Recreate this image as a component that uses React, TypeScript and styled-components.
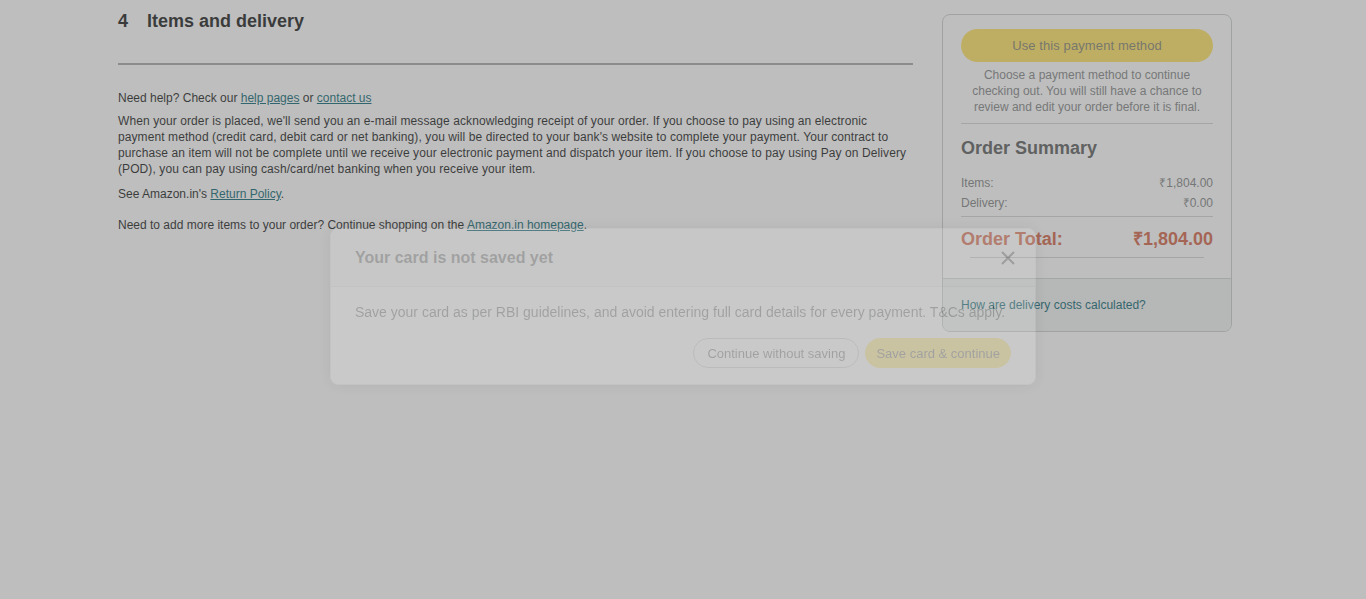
import React from "react";
import styled, { createGlobalStyle } from "styled-components";

const Global = createGlobalStyle`
  html, body { margin: 0; padding: 0; background: #ffffff; }
  body { font-family: "Liberation Sans", Arial, sans-serif; color: #0f1111; }
  * { box-sizing: border-box; }
`;

const Page = styled.div`
  display: flex;
  align-items: flex-start;
  gap: 29px;
  padding: 9px 0 0 118px;
  min-height: 599px;
`;

const Main = styled.div`
  width: 795px;
  font-size: 12px;
  line-height: 16px;
  color: #0f1111;
`;

const SectionHeader = styled.h2`
  display: flex;
  gap: 19px;
  margin: 0;
  font-size: 18px;
  line-height: 24px;
  font-weight: 700;
  color: #0f1111;
`;

const Rule = styled.hr`
  margin: 30px 0 25px;
  border: 0;
  height: 2px;
  background: #a2a6a6;
`;

const Para = styled.p<{ $gap?: number; $wide?: boolean }>`
  margin: 0 0 ${(p) => p.$gap ?? 7}px;
  letter-spacing: ${(p) => (p.$wide ? "0.09px" : "0")};
`;

const Link = styled.a`
  color: #005f6e;
  text-decoration: underline;
  cursor: pointer;
`;

const Side = styled.aside`
  width: 290px;
  margin-top: 5px;
  border: 1px solid #c8cccc;
  border-radius: 8px;
  overflow: hidden;
`;

const SideMain = styled.div`
  padding: 14px 18px 20px;
`;

const PayButton = styled.button`
  display: block;
  width: 100%;
  height: 33px;
  border: 0;
  border-radius: 17px;
  background: #ffe25a;
  color: #7f7f6c;
  font-family: inherit;
  font-size: 13px;
  letter-spacing: 0.1px;
`;

const Helper = styled.p`
  margin: 5px 0 8px;
  text-align: center;
  font-size: 12px;
  line-height: 16px;
  color: #7d7f7f;
`;

const Divider = styled.div<{ $inset?: number; $top?: number }>`
  height: 1px;
  background: #cfd3d3;
  margin: ${(p) => p.$top ?? 0}px ${(p) => p.$inset ?? 0}px 0;
`;

const SummaryTitle = styled.h3`
  margin: 12px 0 13px;
  font-size: 18px;
  line-height: 24px;
  font-weight: 700;
  color: #545656;
`;

const Row = styled.div`
  display: flex;
  justify-content: space-between;
  font-size: 12px;
  line-height: 20px;
  color: #7b7d7d;
`;

const TotalRow = styled.div`
  display: flex;
  justify-content: space-between;
  margin: 10px 0 6px;
  font-size: 18px;
  line-height: 24px;
  font-weight: 700;
  color: #d25e40;
`;

const SideFooter = styled.div`
  border-top: 1px solid #cfd3d3;
  background: #f0f2f2;
  padding: 18px;
  font-size: 12px;
  line-height: 16px;
`;

const FooterLink = styled(Link)`
  text-decoration: none;
`;

const Overlay = styled.div`
  position: fixed;
  inset: 0;
  background: rgba(111, 111, 111, 0.45);
`;

const ModalLayer = styled.div`
  position: fixed;
  inset: 0;
  display: flex;
  justify-content: center;
  align-items: flex-start;
  padding-top: 228px;
`;

const Modal = styled.div`
  width: 706px;
  background: #ffffff;
  border: 1px solid #d5d9d9;
  border-radius: 8px;
  box-shadow: 0 0 14px rgba(0, 0, 0, 0.35);
  opacity: 0.17;
  overflow: hidden;
`;

const ModalHeader = styled.div`
  display: flex;
  align-items: center;
  justify-content: space-between;
  height: 58px;
  padding: 0 19px 0 24px;
  background: #f0f2f2;
  border-bottom: 1px solid #d5d9d9;
`;

const ModalTitle = styled.h4`
  margin: 0;
  font-size: 16px;
  font-weight: 700;
  color: #0f1111;
`;

const CloseButton = styled.button`
  display: flex;
  padding: 0;
  border: 0;
  background: none;
  color: #000;
`;

const ModalBody = styled.div`
  padding: 15px 24px 16px;
`;

const ModalText = styled.p`
  margin: 0 0 16px;
  font-size: 14px;
  line-height: 20px;
  white-space: nowrap;
  color: #0f1111;
`;

const Actions = styled.div`
  display: flex;
  justify-content: flex-end;
  gap: 6px;
`;

const Pill = styled.button<{ $primary?: boolean }>`
  height: 30px;
  padding: 0 ${(p) => (p.$primary ? 10 : 13)}px;
  border-radius: 15px;
  font-family: inherit;
  font-size: 13px;
  color: #0f1111;
  border: 1px solid ${(p) => (p.$primary ? "#ffd814" : "#a8adad")};
  background: ${(p) => (p.$primary ? "#ffd814" : "#ffffff")};
`;

export default function App() {
  return (
    <>
      <Global />
      <Page>
        <Main>
          <SectionHeader>
            <span>4</span>
            <span>Items and delivery</span>
          </SectionHeader>
          <Rule />
          <Para>
            Need help? Check our <Link>help pages</Link> or <Link>contact us</Link>
          </Para>
          <Para $gap={9} $wide>
            When your order is placed, we'll send you an e-mail message acknowledging receipt of your order. If you
            choose to pay using an electronic payment method (credit card, debit card or net banking), you will be
            directed to your bank's website to complete your payment. Your contract to purchase an item will not be
            complete until we receive your electronic payment and dispatch your item. If you choose to pay using Pay on
            Delivery (POD), you can pay using cash/card/net banking when you receive your item.
          </Para>
          <Para $gap={15}>
            See Amazon.in's <Link>Return Policy</Link>.
          </Para>
          <Para>
            Need to add more items to your order? Continue shopping on the <Link>Amazon.in homepage</Link>.
          </Para>
        </Main>
        <Side>
          <SideMain>
            <PayButton disabled>Use this payment method</PayButton>
            <Helper>
              Choose a payment method to continue checking out. You will still have a chance to review and edit your
              order before it is final.
            </Helper>
            <Divider />
            <SummaryTitle>Order Summary</SummaryTitle>
            <Row>
              <span>Items:</span>
              <span>₹1,804.00</span>
            </Row>
            <Row>
              <span>Delivery:</span>
              <span>₹0.00</span>
            </Row>
            <Divider $top={3} />
            <TotalRow>
              <span>Order Total:</span>
              <span>₹1,804.00</span>
            </TotalRow>
            <Divider $inset={9} />
          </SideMain>
          <SideFooter>
            <FooterLink>How are delivery costs calculated?</FooterLink>
          </SideFooter>
        </Side>
      </Page>
      <Overlay />
      <ModalLayer>
        <Modal role="dialog">
          <ModalHeader>
            <ModalTitle>Your card is not saved yet</ModalTitle>
            <CloseButton aria-label="Close">
              <svg width="16" height="16" viewBox="0 0 16 16" fill="none" stroke="currentColor" strokeWidth="2">
                <path d="M2 2 L14 14 M14 2 L2 14" />
              </svg>
            </CloseButton>
          </ModalHeader>
          <ModalBody>
            <ModalText>
              Save your card as per RBI guidelines, and avoid entering full card details for every payment. T&amp;Cs
              apply.
            </ModalText>
            <Actions>
              <Pill>Continue without saving</Pill>
              <Pill $primary>Save card &amp; continue</Pill>
            </Actions>
          </ModalBody>
        </Modal>
      </ModalLayer>
    </>
  );
}
